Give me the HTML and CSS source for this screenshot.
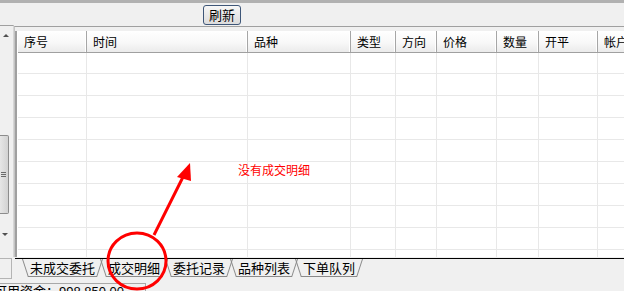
FILE: index.html
```html
<!DOCTYPE html>
<html lang="zh-CN">
<head>
    <meta charset="UTF-8">
    <title>成交明细</title>
    <link rel="stylesheet" href="styles.css">
</head>
<body>
    <div class="topbar"></div>

    <div class="toolbar">
        <button class="btn">刷新</button>
    </div>

    <div class="main">
        <div class="side">
            <div class="arrow-up"></div>
            <div class="thumb"><span class="grip"></span></div>
            <div class="arrow-down"></div>
        </div>
        <div class="panel">
            <div class="grid">
                <div class="cols head">
                    <div class="cell">序号</div>
                    <div class="cell">时间</div>
                    <div class="cell">品种</div>
                    <div class="cell">类型</div>
                    <div class="cell">方向</div>
                    <div class="cell">价格</div>
                    <div class="cell">数量</div>
                    <div class="cell">开平</div>
                    <div class="cell">帐户</div>
                </div>
                <div class="cols body">
                    <div class="col"></div>
                    <div class="col"></div>
                    <div class="col"></div>
                    <div class="col"></div>
                    <div class="col"></div>
                    <div class="col"></div>
                    <div class="col"></div>
                    <div class="col"></div>
                    <div class="col"></div>
                    <!-- empty state message over the rows -->
                    <div class="empty">没有成交明细</div>
                </div>
            </div>
        </div>
    </div>

    <div class="tabbar">
        <div class="corner"></div>
        <div class="tabs">
            <div class="tab">未成交委托</div>
            <div class="tab active">成交明细</div>
            <div class="tab">委托记录</div>
            <div class="tab">品种列表</div>
            <div class="tab">下单队列</div>
        </div>
    </div>

    <div class="status">可用资金：998,850.00</div>

    <!-- red annotation drawn over the screenshot -->
    <svg class="mark" width="624" height="291" viewBox="0 0 624 291">
        <ellipse cx="137" cy="261" rx="29" ry="28" fill="none" stroke="#ff0000" stroke-width="3"/>
        <line x1="154" y1="235" x2="184" y2="175" stroke="#ff0000" stroke-width="3"/>
        <polygon points="190,163 177,177 191,181" fill="#ff0000"/>
    </svg>
</body>
</html>
```

FILE: styles.css
```css
body {
    margin: 0;
    background: #f0f0f0;
    font-family: "Liberation Sans", "Noto Sans CJK SC", sans-serif;
    font-size: 12px;
    color: #000;
    position: relative;
    height: 291px;
    overflow: hidden;
}
.topbar {
    height: 3px;
    background: #b1b1b1;
}
.toolbar {
    height: 22px;
    padding-left: 203px;
    padding-top: 2px;
    box-sizing: border-box;
}
.btn {
    height: 20px;
    width: 38px;
    padding: 0;
    border: 1px solid #3e5678;
    border-radius: 3px;
    background: linear-gradient(#f7f7f7, #e9e9e9 50%, #dcdcdc);
    font-family: "Noto Sans CJK SC", sans-serif;
    font-size: 13px;
    line-height: 16px;
    color: #000;
}

/* grid area */
.main {
    display: flex;
    height: 232px;
}
.side {
    width: 14px;
    border-top: 1px solid #a0a0a0;
    border-right: 1px solid #d6d6d6;
    display: flex;
    flex-direction: column;
    padding-top: 8px;
    box-sizing: border-box;
}
.arrow-up {
    width: 0;
    margin-left: 3px;
    border-left: 3px solid transparent;
    border-right: 3px solid transparent;
    border-bottom: 3px solid #505050;
}
.thumb {
    margin-top: 98px;
    width: 8px;
    height: 77px;
    border: 1px solid #8c8c8c;
    border-left: none;
    border-radius: 0 2px 2px 0;
    background: linear-gradient(to right, #e6e6e6, #d2d2d2);
    display: flex;
    align-items: center;
}
.grip {
    width: 5px;
    height: 5px;
    margin-left: 1px;
    background: repeating-linear-gradient(#6a6a6a 0 1px, transparent 1px 2px);
}
.arrow-down {
    width: 0;
    margin-top: 19px;
    margin-left: 2px;
    border-left: 3px solid transparent;
    border-right: 3px solid transparent;
    border-top: 3px solid #505050;
}
.panel {
    flex: 1;
    margin-top: 1px;
    border-top: 1px solid #a0a0a0;
    border-left: 1px solid #c4c4c4;
    padding-top: 4px;
    min-width: 0;
}
.grid {
    height: 100%;
    border-left: 2px solid #a0a0a0;
    padding-left: 1px;
    background: #fff;
    display: flex;
    flex-direction: column;
}
.cols {
    display: grid;
    grid-template-columns: 69px 161px 103px 45px 41px 60px 42px 59px 80px;
}
.head {
    height: 22px;
    border-bottom: 1px solid #a0a0a0;
    box-sizing: border-box;
    background: linear-gradient(#ffffff, #f8f8f8 55%, #ebebeb);
}
.cell {
    border-right: 1px solid #a6a6a6;
    box-shadow: inset -1px 0 #ffffff;
    padding-left: 6px;
    line-height: 21px;
    font-family: "Noto Sans CJK SC", sans-serif;
    white-space: nowrap;
    overflow: hidden;
}
.body {
    flex: 1;
    position: relative;
    background: repeating-linear-gradient(transparent 0 21px, #e8e8e8 21px 22px);
    background-position: 0 -1px;
}
.col {
    border-right: 1px solid #e8e8e8;
}
.empty {
    position: absolute;
    left: 220px;
    top: 110px;
    color: #ff0000;
    font-family: "Noto Sans CJK SC", sans-serif;
    font-size: 12px;
    line-height: 14px;
}

/* tab strip */
.tabbar {
    display: flex;
    height: 20px;
    margin-top: 1px;
}
.corner {
    width: 12px;
    height: 21px;
    border: 1px solid #b4b4b4;
    border-left: none;
    box-sizing: border-box;
    margin-right: 3px;
}
.tabs {
    flex: 1;
    display: flex;
    border-top: 1px solid #000;
    padding-left: 7px;
}
.tab {
    position: relative;
    height: 18px;
    padding: 0 8px 0 8px;
    margin-right: -3px;
    font-family: "Noto Sans CJK SC", sans-serif;
    font-size: 13px;
    line-height: 17px;
    white-space: nowrap;
    background: linear-gradient(#8a8a8a, #8a8a8a) no-repeat center bottom / calc(100% - 12px) 1px;
}
.tab::before,
.tab::after {
    content: "";
    position: absolute;
    top: 0;
    bottom: 0;
    transform-origin: top;
}
.tab::before {
    left: 0;
    border-left: 1px solid #8a8a8a;
    transform: skewX(18deg);
}
.tab::after {
    right: 0;
    border-right: 1px solid #8a8a8a;
    transform: skewX(-18deg);
}

.status {
    margin-top: 5px;
    margin-left: -6px;
    width: 151px;
    border-top: 1px solid #a8a8a8;
    border-right: 1px solid #a8a8a8;
    padding-top: 0;
    line-height: 16px;
    font-family: "Liberation Sans", "Noto Sans CJK SC", sans-serif;
    font-size: 13px;
    white-space: nowrap;
}

.mark {
    position: absolute;
    left: 0;
    top: 0;
    pointer-events: none;
}
```
